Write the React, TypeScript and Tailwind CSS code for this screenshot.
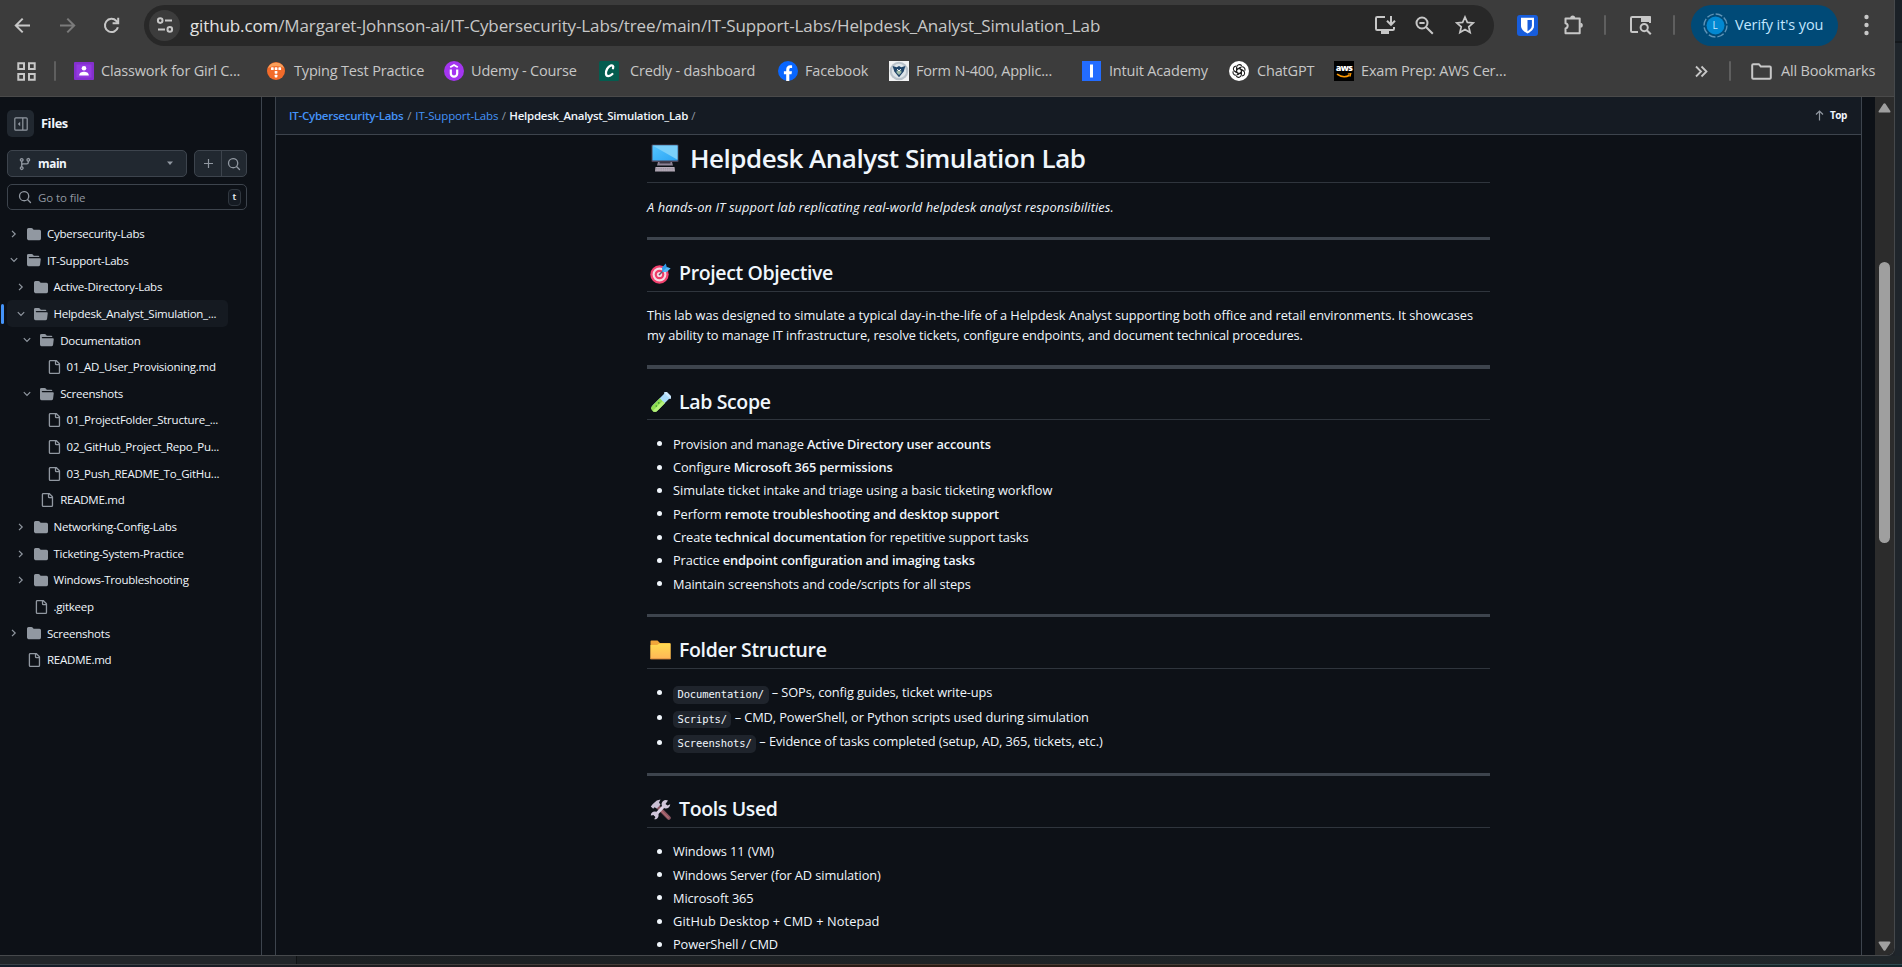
import React from "react";

type P = { children?: React.ReactNode };

/* ---------- toolbar icons ---------- */

const stroke = { fill: "none", stroke: "currentColor", strokeWidth: 2 } as const;

const Arrow = ({ flip }: { flip?: boolean }) => (
  <svg width="17" height="17" viewBox="0 0 17 17" className={flip ? "rotate-180" : ""} {...stroke}>
    <path d="M16 8.5H2M8.7 1.6L1.8 8.5l6.9 6.9" />
  </svg>
);

const Reload = () => (
  <svg width="17" height="17" viewBox="0 0 17 17" {...stroke}>
    <path d="M14.9 10.2A6.6 6.6 0 1 1 13.4 4L15 5.7" />
    <path d="M15.2 0.8v5.4H9.6" />
  </svg>
);

const Tune = () => (
  <svg width="18" height="18" viewBox="0 0 18 18" {...stroke}>
    <circle cx="4.2" cy="4.6" r="2.3" />
    <path d="M9 4.6h7M2 13.4h7" />
    <circle cx="13.8" cy="13.4" r="2.3" />
  </svg>
);

const Install = () => (
  <svg width="22" height="20" viewBox="0 0 22 20" {...stroke}>
    <path d="M11 2H3.2Q2 2 2 3.2v10.6Q2 15 3.2 15h15.6q1.2 0 1.2-1.2V12" />
    <path d="M7 17.5h8" strokeWidth="3" />
    <path d="M17 1v8M13 5.8l4 4 4-4" />
  </svg>
);

const ZoomOut = () => (
  <svg width="19" height="19" viewBox="0 0 19 19" {...stroke}>
    <circle cx="7" cy="7" r="5.5" />
    <path d="M11 11l6.8 6.8M4.4 7h5.2" />
  </svg>
);

const Star = () => (
  <svg width="20" height="20" viewBox="0 0 20 20" {...stroke} strokeWidth="1.7">
    <path d="M10 2l2.35 5.4 5.85.5-4.45 3.85 1.35 5.75L10 14.45 4.9 17.5l1.35-5.75L1.8 7.9l5.85-.5z" />
  </svg>
);

const Shield = () => (
  <svg width="21" height="21" viewBox="0 0 21 21">
    <rect width="21" height="21" rx="3" fill="#175ddc" />
    <path d="M4 2.8h13v8c0 4-4.2 6.6-6.5 7.8C8.2 17.4 4 14.8 4 10.800z" fill="#fff" />
    <path d="M10.5 5h4.4v5.8c0 2.6-2.6 4.4-4.4 5.4z" fill="#175ddc" />
  </svg>
);

const Puzzle = () => (
  <svg width="22" height="22" viewBox="0 0 22 22" {...stroke}>
    <path d="M2.5 4.5h14.2v14.7H2.5v-4.700a2.700 2.700 0 0 0 0-5.300z" strokeLinejoin="round" />
    <path d="M7.2 4a2.500 2.500 0 0 1 5 0zM17.300 8.800a2.500 2.500 0 0 1 0 5z" fill="currentColor" stroke="none" />
  </svg>
);

const TabSearch = () => (
  <svg width="23" height="20" viewBox="0 0 23 20" {...stroke}>
    <path d="M9 17H3.2Q2 17 2 15.8V3.2Q2 2 3.2 2h16.6Q21 2 21 3.2V8" />
    <path d="M12 1h9a1 1 0 0 1 1 1v5H12z" fill="currentColor" stroke="none" />
    <circle cx="15.2" cy="12.6" r="3.6" />
    <path d="M17.8 15.2l4 4" />
  </svg>
);

const Divider = () => <div className="h-5 w-[2px] shrink-0 rounded bg-[#5f5f5f]" />;

const Slot = ({ children, w }: P & { w: string }) => (
  <div className={`flex h-full shrink-0 items-center justify-center ${w}`}>{children}</div>
);

/* ---------- bookmark icons ---------- */

const fav: Record<string, React.ReactNode> = {
  classroom: (
    <svg width="20" height="20" viewBox="0 0 20 20">
      <rect y="1" width="20" height="18" rx="1" fill="#8430ce" />
      <rect x="2.5" y="3.5" width="15" height="13" fill="#a142f4" opacity=".5" />
      <circle cx="10" cy="7.2" r="2.3" fill="#fff" />
      <path d="M5.2 14.4c0-2.700 2.600-3.700 4.800-3.700s4.800 1 4.800 3.700z" fill="#fff" />
    </svg>
  ),
  typing: (
    <svg width="20" height="20" viewBox="0 0 20 20">
      <circle cx="9" cy="10" r="9" fill="#f26b2a" />
      <path d="M.8 7A9 9 0 0 1 17.200 7Q9 3 .8 7z" fill="#f9a05c" />
      <g fill="#fff">
        <rect x="4" y="6.3" width="2.700" height="2.700" rx=".6" />
        <rect x="7.700" y="6.3" width="2.700" height="2.700" rx=".6" />
        <rect x="11.400" y="6.3" width="2.700" height="2.700" rx=".6" />
        <rect x="7.700" y="10" width="2.700" height="2.700" rx=".6" />
        <rect x="7.700" y="13.700" width="2.700" height="2.700" rx=".6" />
      </g>
    </svg>
  ),
  udemy: (
    <svg width="20" height="20" viewBox="0 0 20 20">
      <circle cx="10" cy="10" r="10" fill="#a435f0" />
      <path d="M6.8 8.5v4a3.200 3.200 0 0 0 6.400 0v-4" fill="none" stroke="#fff" strokeWidth="2.2" />
      <path d="M6.2 6.2L10 4l3.800 2.200" fill="none" stroke="#fff" strokeWidth="1.8" />
    </svg>
  ),
  credly: (
    <svg width="20" height="20" viewBox="0 0 20 20">
      <rect width="20" height="20" rx="1.5" fill="#045c4f" />
      <path d="M14 7.2c.9-2.200-.6-3.300-2.400-2.600-2.700 1-5 5-4.600 8.200.4 3 3.700 3 6.400.2" fill="none" stroke="#fff" strokeWidth="2.3" strokeLinecap="round" />
    </svg>
  ),
  facebook: (
    <svg width="20" height="20" viewBox="0 0 20 20">
      <circle cx="10" cy="10" r="10" fill="#0866ff" />
      <path d="M8.2 20v-6.800H5.900v-3h2.300V8.700c0-3 1.500-4.500 4.300-4.500.6 0 1.300.1 1.600.2v2.700h-1.200c-1.200 0-1.600.5-1.600 1.600v1.500h2.700l-.5 3h-2.200V20z" fill="#fff" />
    </svg>
  ),
  uscis: (
    <svg width="20" height="20" viewBox="0 0 20 20">
      <rect width="20" height="20" fill="#f1f2f3" />
      <circle cx="10" cy="10" r="9.3" fill="#b9c2ca" />
      <circle cx="10" cy="10" r="7.2" fill="#dfe5e9" />
      <path d="M3.600 5l4.200 1.200L10 5l2.200 1.200L16.400 5l-1.700 5.500L10 16.200 5.300 10.500z" fill="#1f4468" />
      <path d="M7.600 9.500h4.800v2.300L10 14l-2.400-2.200z" fill="#9bb7a5" />
      <path d="M8.200 8l1.800 2 1.800-2" stroke="#fff" fill="none" />
    </svg>
  ),
  intuit: (
    <svg width="20" height="20" viewBox="0 0 20 20">
      <rect width="19" height="20" fill="#236cff" />
      <rect x="8" y="3.5" width="3" height="13" fill="#fff" />
    </svg>
  ),
  chatgpt: (
    <svg width="20" height="20" viewBox="0 0 20 20">
      <circle cx="10" cy="10" r="10" fill="#fff" />
      <g fill="none" stroke="#222" strokeWidth="1.1">
        {[0, 60, 120, 180, 240, 300].map((a) => (
          <path key={a} transform={`rotate(${a} 10 10)`} d="M7.600 11.300V6.400A2.800 2.800 0 0 1 12.700 4.900M7.600 8.700L11.800 6.200" />
        ))}
      </g>
    </svg>
  ),
  aws: (
    <div className="flex h-5 w-5 flex-col items-center bg-black pt-[2px]">
      <span className="font-['Open_Sans'] text-[9px] leading-[9px] font-extrabold tracking-[-0.6px] text-white">aws</span>
      <svg width="16" height="6" viewBox="0 0 16 6" className="mt-[1px]">
        <path d="M1 1.200Q7.500 5.800 13.600 2.200" fill="none" stroke="#f90" strokeWidth="1.6" />
        <path d="M11.800 1l3-.3-.8 2.900" fill="none" stroke="#f90" strokeWidth="1.1" />
      </svg>
    </div>
  ),
};

const bookmarks = [
  ["classroom", "Classwork for Girl C...", "w-[193px] gap-[7px]"],
  ["typing", "Typing Test Practice", "w-[177px] gap-[7px]"],
  ["udemy", "Udemy - Course", "w-[155px] gap-[7px]"],
  ["credly", "Credly - dashboard", "w-[179px] gap-[11px]"],
  ["facebook", "Facebook", "w-[111px] gap-[7px]"],
  ["uscis", "Form N-400, Applic...", "w-[193px] gap-[7px]"],
  ["intuit", "Intuit Academy", "w-[147px] gap-[7px]"],
  ["chatgpt", "ChatGPT", "w-[105px] gap-[8px]"],
  ["aws", "Exam Prep: AWS Cer...", "w-[180px] gap-[7px]"],
];

function Toolbar() {
  return (
    <div className="flex h-[50px] items-center text-[#c7c7c7]">
      <Slot w="w-[44px]"><Arrow /></Slot>
      <div className="flex w-[48px] justify-center text-[#7b7b7b]"><Arrow flip /></div>
      <Slot w="w-[43px]"><Reload /></Slot>
      <div className="ml-[11px] flex h-[41px] w-[1350px] shrink-0 items-center rounded-full bg-[#282828] pl-[5px]">
        <div className="flex h-[31px] w-[31px] items-center justify-center rounded-full bg-[#3c3c3c]"><Tune /></div>
        <div className="mt-[1px] ml-[10px] w-[1180px] text-[17px] tracking-[-0.12px]">
          <span className="text-[#e3e3e3]">github.com</span>
          /Margaret-Johnson-ai/IT-Cybersecurity-Labs/tree/main/IT-Support-Labs/Helpdesk_Analyst_Simulation_Lab
        </div>
        <Slot w="w-[29px]"><Install /></Slot>
        <Slot w="w-[50px]"><ZoomOut /></Slot>
        <Slot w="w-[32px]"><Star /></Slot>
      </div>
      <Slot w="w-[67px]"><Shield /></Slot>
      <Slot w="w-[25px]"><Puzzle /></Slot>
      <Slot w="w-[38px]"><Divider /></Slot>
      <Slot w="w-[33px]"><TabSearch /></Slot>
      <Slot w="w-[34px]"><Divider /></Slot>
      <div className="flex h-[41px] w-[147px] shrink-0 items-center rounded-full bg-[#004a77] pl-3 text-[14.5px] tracking-[-0.1px] text-[#c2e7ff]">
        <div className="relative flex h-6 w-6 items-center justify-center">
          <svg width="25" height="25" viewBox="0 0 25 25" className="absolute">
            <circle cx="12.5" cy="12.5" r="11.5" fill="none" stroke="#5f93b5" strokeWidth="1.4" strokeDasharray="7 2" />
            <circle cx="12.5" cy="12.5" r="9" fill="#0288d1" />
          </svg>
          <span className="relative text-[10px]">L</span>
        </div>
        <span className="ml-2 whitespace-nowrap">Verify it's you</span>
      </div>
      <Slot w="w-[56px]">
        <svg width="5" height="22" viewBox="0 0 5 22" fill="currentColor">
          <circle cx="2.5" cy="3" r="2.2" /><circle cx="2.5" cy="11" r="2.2" /><circle cx="2.5" cy="19" r="2.2" />
        </svg>
      </Slot>
    </div>
  );
}

function Bookmarks() {
  return (
    <div className="flex h-[42px] items-center text-[14.5px] tracking-[-0.18px] whitespace-nowrap text-[#c7c7c7]">
      <svg width="19" height="19" viewBox="0 0 19 19" className="ml-[17px] shrink-0" {...stroke}>
        <path d="M1.3 1.3h5.700V7H1.300zM12 1.300h5.700V7H12zM1.300 12h5.700v5.700H1.300zM12 12h5.700v5.700H12z" />
      </svg>
      <Slot w="w-[38px]"><Divider /></Slot>
      {bookmarks.map(([k, label, cls]) => (
        <div key={k} className={`flex shrink-0 items-center ${cls}`}>{fav[k]}<span>{label}</span></div>
      ))}
      <svg width="13" height="13" viewBox="0 0 13 13" className="ml-[181px] shrink-0" {...stroke} strokeWidth="1.8">
        <path d="M1 1.500l5 5-5 5M6.500 1.500l5 5-5 5" />
      </svg>
      <Slot w="w-[43px]"><Divider /></Slot>
      <svg width="21" height="17" viewBox="0 0 21 17" className="shrink-0" {...stroke}>
        <path d="M1.200 14.800V2.200Q1.200 1.200 2.200 1.200h5.600l2 2.300h9q1 0 1 1v10.300q0 1-1 1H2.200q-1 0-1-1z" />
      </svg>
      <span className="ml-[9px]">All Bookmarks</span>
    </div>
  );
}

/* ---------- file tree ---------- */

const Folder = ({ open }: { open?: boolean }) => (
  <svg width="14" height="14" viewBox="0 0 16 16" fill="#9198a1" className="shrink-0">
    {open ? (
      <path d="M.513 1.513A1.750 1.750 0 0 1 1.750 1h3.500c.550 0 1.070.260 1.400.700l.900 1.200a.250.250 0 0 0 .200.100H13a1 1 0 0 1 1 1v.500H2.750a.750.750 0 0 0 0 1.500h11.978a1 1 0 0 1 .994 1.117L15 13.250A1.750 1.750 0 0 1 13.250 15H1.750A1.750 1.750 0 0 1 0 13.250V2.750c0-.464.184-.910.513-1.237Z" />
    ) : (
      <path d="M1.750 1A1.750 1.750 0 0 0 0 2.750v10.500C0 14.216.784 15 1.750 15h12.500A1.750 1.750 0 0 0 16 13.250v-8.500A1.750 1.750 0 0 0 14.250 3H7.500a.250.250 0 0 1-.200-.100l-.900-1.200C6.070 1.260 5.550 1 5 1H1.750Z" />
    )}
  </svg>
);

const FileIcon = () => (
  <svg width="14" height="14" viewBox="0 0 16 16" fill="#9198a1" className="shrink-0">
    <path d="M2 1.750C2 .784 2.784 0 3.750 0h6.586c.464 0 .909.184 1.237.513l2.914 2.914c.329.328.513.773.513 1.237v9.586A1.750 1.750 0 0 1 13.250 16h-9.500A1.750 1.750 0 0 1 2 14.250Zm1.750-.250a.250.250 0 0 0-.250.250v12.500c0 .138.112.250.250.250h9.500a.250.250 0 0 0 .250-.250V6h-2.750A1.750 1.750 0 0 1 9 4.250V1.500Zm6.750.062V4.250c0 .138.112.250.250.250h2.688l-.011-.013-2.914-2.914-.013-.011Z" />
  </svg>
);

const Chevron = ({ open }: { open?: boolean }) => (
  <svg width="8" height="8" viewBox="0 0 8 8" fill="none" stroke="#9198a1" strokeWidth="1.2" className="shrink-0">
    {open ? <path d="M.8 2.200L4 5.400l3.200-3.200" /> : <path d="M2 .8L5.200 4 2 7.200" />}
  </svg>
);

const Search = () => (
  <svg width="14" height="14" viewBox="0 0 16 16" fill="#9198a1" className="shrink-0">
    <path d="M10.680 11.740a6 6 0 0 1-7.922-8.982 6 6 0 0 1 8.982 7.922l3.040 3.040a.749.749 0 1 1-1.060 1.060ZM11.500 7a4.499 4.499 0 1 0-8.997 0A4.499 4.499 0 0 0 11.500 7Z" />
  </svg>
);

type Kind = "closed" | "open" | "file";
const tree: [Kind, number, string][] = [
  ["closed", 0, "Cybersecurity-Labs"],
  ["open", 0, "IT-Support-Labs"],
  ["closed", 1, "Active-Directory-Labs"],
  ["open", 1, "Helpdesk_Analyst_Simulation_..."],
  ["open", 2, "Documentation"],
  ["file", 3, "01_AD_User_Provisioning.md"],
  ["open", 2, "Screenshots"],
  ["file", 3, "01_ProjectFolder_Structure_..."],
  ["file", 3, "02_GitHub_Project_Repo_Pu..."],
  ["file", 3, "03_Push_README_To_GitHu..."],
  ["file", 2, "README.md"],
  ["closed", 1, "Networking-Config-Labs"],
  ["closed", 1, "Ticketing-System-Practice"],
  ["closed", 1, "Windows-Troubleshooting"],
  ["file", 1, ".gitkeep"],
  ["closed", 0, "Screenshots"],
  ["file", 0, "README.md"],
];
const indent = ["pl-[3px]", "pl-[9.5px]", "pl-[16.2px]", "pl-[22.6px]"];

function Sidebar() {
  return (
    <aside className="flex w-[262px] shrink-0 flex-col border-r border-[#3d444d] text-[#f0f6fc]">
      <div className="mt-[13px] ml-[7px] flex items-center">
        <div className="flex h-[27px] w-[27px] items-center justify-center rounded-[5px] bg-[#212830]">
          <svg width="14" height="14" viewBox="0 0 14 14" fill="none" stroke="#9198a1" strokeWidth="1.2">
            <rect x=".8" y=".8" width="12.4" height="12.4" rx="1" />
            <path d="M8.800 1v12" />
            <path d="M6.200 4.800v4.400L3.800 7z" fill="#9198a1" stroke="none" />
          </svg>
        </div>
        <span className="mt-[1px] ml-[7px] text-[12.8px] font-bold tracking-[-0.4px]">Files</span>
      </div>
      <div className="mt-[13px] ml-[7px] flex gap-[7px]">
        <div className="flex h-[27px] w-[180px] items-center rounded-[5px] border border-[#3d444d] bg-[#212830] pl-[10px]">
          <svg width="14" height="14" viewBox="0 0 16 16" fill="#9198a1">
            <path d="M9.500 3.250a2.250 2.250 0 1 1 3 2.122V6A2.500 2.500 0 0 1 10 8.500H6a1 1 0 0 0-1 1v1.128a2.251 2.251 0 1 1-1.500 0V5.372a2.250 2.250 0 1 1 1.500 0v1.836A2.493 2.493 0 0 1 6 7h4a1 1 0 0 0 1-1v-.628A2.250 2.250 0 0 1 9.500 3.250Zm-6 0a.750.750 0 1 0 1.500 0 .750.750 0 0 0-1.500 0Zm8.250-.750a.750.750 0 1 0 0 1.500.750.750 0 0 0 0-1.500ZM4.250 12a.750.750 0 1 0 0 1.500.750.750 0 0 0 0-1.500Z" />
          </svg>
          <span className="ml-[6px] w-[128px] text-[11.8px] font-bold tracking-[-0.4px]">main</span>
          <svg width="8" height="5" viewBox="0 0 8 5" fill="#9198a1"><path d="M1 .5h6L4 4z" /></svg>
        </div>
        <div className="flex h-[27px] w-[53px] rounded-[5px] border border-[#3d444d] bg-[#212830]">
          <div className="flex w-[27px] items-center justify-center border-r border-[#3d444d]">
            <svg width="11" height="11" viewBox="0 0 11 11" stroke="#9198a1" strokeWidth="1.2"><path d="M5.500 1v9M1 5.500h9" /></svg>
          </div>
          <div className="flex flex-1 items-center justify-center"><Search /></div>
        </div>
      </div>
      <div className="mt-[7px] ml-[7px] flex h-[26px] w-[240px] items-center rounded-[5px] border border-[#3d444d] pr-[5px] pl-[10px]">
        <Search />
        <span className="mt-[1px] ml-[6px] text-[11.5px] tracking-[-0.1px] text-[#9198a1]">Go to file</span>
        <span className="ml-auto flex h-[17px] w-[13px] items-center justify-center rounded-[4px] border border-[#30373f] bg-[#151b23] text-[9.5px] leading-none font-semibold">t</span>
      </div>
      <div className="mt-[10.3px] ml-[1px] flex flex-col">
        {tree.map(([kind, level, name], i) => {
          const active = i === 3;
          return (
            <div key={i} className="flex h-[26.67px] items-center">
              <div className={active ? "h-5 w-[3px] shrink-0 rounded bg-[#4493f8]" : "w-[3px] shrink-0"} />
              <div className={`ml-[3px] flex h-full w-[221px] items-center rounded-[5px] ${indent[level]} ${active ? "bg-[#151a21]" : ""}`}>
                <div className="flex w-[17px] shrink-0">{kind !== "file" && <Chevron open={kind === "open"} />}</div>
                {kind === "file" ? <FileIcon /> : <Folder open={kind === "open"} />}
                <span className="ml-[6px] text-[11.5px] leading-none tracking-[-0.24px] whitespace-nowrap">{name}</span>
              </div>
            </div>
          );
        })}
      </div>
    </aside>
  );
}

/* ---------- heading glyphs ---------- */

const Computer = () => (
  <svg width="28" height="28" viewBox="0 0 28 28">
    <defs>
      <linearGradient id="scr" x1="0" y1="0" x2="1" y2="1">
        <stop offset="0" stopColor="#55c4ff" /><stop offset="1" stopColor="#2aa5f5" />
      </linearGradient>
    </defs>
    <rect x=".5" y=".5" width="27" height="17.5" rx="1" fill="#4a4458" />
    <rect x="1.5" y="1.5" width="25" height="15" fill="url(#scr)" />
    <path d="M1.500 1.500h25v14.300z" fill="#7ad0fb" />
    <path d="M7 18h14l1 3.500H6z" fill="#8d8496" />
    <rect x="8.5" y="17.5" width="11" height="2" fill="#3a3644" />
    <path d="M4.500 23h19l.5 4.500H4z" fill="#b5acb9" />
    <path d="M5 24.500h18M5 26h18" stroke="#8f8795" strokeWidth=".6" strokeDasharray="1.5 .7" />
  </svg>
);

const Target = () => (
  <svg width="21" height="21" viewBox="0 0 21 21">
    <circle cx="9.5" cy="11.5" r="9.2" fill="#f2426f" />
    <circle cx="9.5" cy="11.5" r="6.9" fill="#f3dbe4" />
    <circle cx="9.5" cy="11.5" r="4.8" fill="#ee3d68" />
    <circle cx="9.5" cy="11.5" r="2.6" fill="#f3dbe4" />
    <path d="M9 12l6-6" stroke="#5b5570" strokeWidth="1.4" />
    <path d="M12.300 8.700l-.300-4.200L15.800.600l1 3.600 3.700 1-3.900 3.800z" fill="#2f9bea" />
    <path d="M12.300 8.700L16.800 4.200l3.700 1-3.900 3.800z" fill="#56b9f8" />
  </svg>
);

const Tube = () => (
  <svg width="21" height="21" viewBox="0 0 21 21">
    <g transform="rotate(45 10.5 10.5)">
      <path d="M7 1h7v17a3.500 3.500 0 0 1-7 0z" fill="#a9dbfb" />
      <path d="M7 8h7v10.500a3.500 3.500 0 0 1-7 0z" fill="#8fdc50" />
      <path d="M11 8h3v10.500a3.500 3.500 0 0 1-3 3.500z" fill="#b5f07a" />
      <rect x="6" y="-1.5" width="9" height="3" rx=".8" fill="#cbe9ff" />
      <circle cx="9.5" cy="12" r=".9" fill="#3d9c3a" /><circle cx="10" cy="16" r=".8" fill="#3d9c3a" />
    </g>
  </svg>
);

const YellowFolder = () => (
  <svg width="21" height="20" viewBox="0 0 21 20">
    <defs>
      <linearGradient id="fld" x1="0" y1="0" x2="0" y2="1">
        <stop offset="0" stopColor="#ffdc50" /><stop offset="1" stopColor="#ffb657" />
      </linearGradient>
    </defs>
    <path d="M.5 1.500Q.5.500 1.500.500h6l2.500 2.500H19.500q1 0 1 1V19H.5z" fill="#f0a63a" />
    <path d="M.5 5h6.500l2.500-1.500h11V19H.5z" fill="url(#fld)" />
    <rect x=".5" y="18.4" width="20" height="1" fill="#d98a3e" />
  </svg>
);

const Tools = () => (
  <svg width="21" height="21" viewBox="0 0 21 21">
    <path d="M8.500 8.500l10.300 10.300" stroke="#8a5561" strokeWidth="4" strokeLinecap="round" />
    <path d="M10 10.500l8.300 8.300" stroke="#b06a72" strokeWidth="1.4" strokeLinecap="round" />
    <path d="M.8 7.500L2.800 5l4-3.600L10.500.500 9 3.400l1.500 2.400L6.800 9.600 4.500 8.200 3.200 9.800z" fill="#c9bfd3" />
    <path d="M4.500 17L14.500 6.500" stroke="#ddd3e6" strokeWidth="3" />
    <path d="M18 1.500A4.300 4.300 0 1 0 20.200 5.200L17.500 6.600l-2-1.700z" fill="#cfc5d9" />
    <path d="M.8 16.400A3.900 3.900 0 1 1 4.200 20.300L5.600 17.800 3.900 16z" fill="#cfc5d9" />
  </svg>
);

/* ---------- readme ---------- */

const Rule = () => <div className="my-[20px] h-[3.33px] bg-[#3d444d]" />;
const H2 = ({ icon, children }: P & { icon: React.ReactNode }) => (
  <h2 className="mb-[13.33px] flex h-[31.83px] items-start border-b border-[#2f353d] text-[19.5px] leading-[26px] font-semibold tracking-[-0.358px]">
    <span className="mt-[3px] mr-[8px] ml-[3px]">{icon}</span>
    {children}
  </h2>
);
const B = ({ children }: P) => <strong className="font-semibold tracking-[-0.135px]">{children}</strong>;
const Code = ({ children }: P) => (
  <code className="inline-block h-[17.5px] rounded-[5px] bg-[#1f242c] px-[4.5px] align-[-1px] font-['DejaVu_Sans_Mono',monospace] text-[10.5px] leading-[16px] tracking-[-0.144px]">{children}</code>
);
const List = ({ items, row }: { items: React.ReactNode[]; row: string }) => (
  <ul className="flex flex-col gap-[3.33px] pl-[10px]">
    {items.map((it, i) => (
      <li key={i} className={`flex items-center tracking-[-0.09px] ${row}`}>
        <span className="mr-[11px] h-[5px] w-[5px] rounded-full bg-[#f0f6fc]" />
        <span>{it}</span>
      </li>
    ))}
  </ul>
);

function Readme() {
  return (
    <article className="mx-auto mt-[5.4px] w-[843px] text-[12.8px] leading-[20px] tracking-[-0.052px] text-[#f0f6fc]">
      <h1 className="flex h-[43px] items-start border-b border-[#2f353d] text-[26px] leading-[36px] font-semibold tracking-[-0.48px]">
        <span className="mt-[4px] mr-[11px] ml-[4px]"><Computer /></span>
        Helpdesk Analyst Simulation Lab
      </h1>
      <p className="mt-[13.33px] tracking-[0.105px] italic">
        A hands-on IT support lab replicating real-world helpdesk analyst responsibilities.
      </p>
      <Rule />
      <H2 icon={<Target />}>Project Objective</H2>
      <p>
        This lab was designed to simulate a typical day-in-the-life of a Helpdesk Analyst supporting both office and retail environments. It showcases
        <br />
        <span className="tracking-[-0.1px]">my ability to manage IT infrastructure, resolve tickets, configure endpoints, and document technical procedures.</span>
      </p>
      <Rule />
      <H2 icon={<Tube />}>Lab Scope</H2>
      <List
        row="h-[20px]"
        items={[
          <>Provision and manage <B>Active Directory user accounts</B></>,
          <>Configure <B>Microsoft 365 permissions</B></>,
          <span className="tracking-[-0.052px]">Simulate ticket intake and triage using a basic ticketing workflow</span>,
          <>Perform <B>remote troubleshooting and desktop support</B></>,
          <>Create <B>technical documentation</B> for repetitive support tasks</>,
          <>Practice <B>endpoint configuration and imaging tasks</B></>,
          "Maintain screenshots and code/scripts for all steps",
        ]}
      />
      <Rule />
      <H2 icon={<YellowFolder />}>Folder Structure</H2>
      <List
        row="h-[21.3px]"
        items={[
          <><Code>Documentation/</Code> – SOPs, config guides, ticket write-ups</>,
          <><Code>Scripts/</Code> – CMD, PowerShell, or Python scripts used during simulation</>,
          <><Code>Screenshots/</Code> – Evidence of tasks completed (setup, AD, 365, tickets, etc.)</>,
        ]}
      />
      <Rule />
      <H2 icon={<Tools />}>Tools Used</H2>
      <List
        row="h-[20px]"
        items={[
          "Windows 11 (VM)",
          "Windows Server (for AD simulation)",
          "Microsoft 365",
          <span className="tracking-[0.1px]">GitHub Desktop + CMD + Notepad</span>,
          "PowerShell / CMD",
        ]}
      />
    </article>
  );
}

function Main() {
  return (
    <main className="mr-[13px] ml-[13px] flex min-w-0 flex-1 flex-col border-x border-[#3d444d]">
      <div className="flex h-[38px] shrink-0 items-center border-b border-[#3d444d] bg-[#151b23] pr-[14px] pl-[13px] text-[11.5px] tracking-[-0.24px] whitespace-nowrap text-[#9198a1]">
        <span className="font-semibold text-[#4493f8]">IT-Cybersecurity-Labs</span>
        <span className="mx-[4px]">/</span>
        <span className="tracking-[-0.134px] text-[#4493f8]">IT-Support-Labs</span>
        <span className="mx-[3.5px]">/</span>
        <span className="font-semibold tracking-[-0.27px] text-[#f0f6fc]">Helpdesk_Analyst_Simulation_Lab</span>
        <span className="mx-[3px]">/</span>
        <svg width="9" height="11" viewBox="0 0 9 11" fill="none" stroke="#9198a1" strokeWidth="1.2" className="ml-auto">
          <path d="M4.500 10.500V1M1 4.500L4.500 1 8 4.500" />
        </svg>
        <span className="ml-[6px] text-[10px] font-bold tracking-[-0.4px] text-[#f0f6fc]">Top</span>
      </div>
      <div className="min-h-0 flex-1 overflow-hidden"><Readme /></div>
    </main>
  );
}

export default function App() {
  return (
    <div className="flex h-[967px] w-[1902px] flex-col overflow-hidden bg-[#1f2328] font-['Open_Sans','Noto_Sans',sans-serif]">
      <div className="flex h-[956px] shrink-0">
        <div className="flex w-[1895px] flex-col overflow-hidden rounded-br-[8px] border-r border-b border-[#46494c] bg-[#0d1117]">
          <div className="h-[97px] shrink-0 border-b border-[#4a4a4a] bg-[#3c3c3c]">
            <Toolbar />
            <Bookmarks />
          </div>
          <div className="flex min-h-0 flex-1">
            <Sidebar />
            <Main />
            <div className="flex w-[19px] shrink-0 flex-col items-center bg-[#2c2c2c]">
              <svg width="13" height="10" viewBox="0 0 13 10" className="mt-[6px]" fill="#9f9f9f"><path d="M5.500.800q1-1 2 0L12.300 8q.5 1.500-1 1.500H1.700Q.2 9.500.7 8z" /></svg>
              <div className="mt-[149px] h-[281px] w-[11px] rounded-full bg-[#9f9f9f]" />
              <svg width="13" height="10" viewBox="0 0 13 10" className="mt-auto mb-[4px] rotate-180" fill="#9f9f9f"><path d="M5.500.800q1-1 2 0L12.300 8q.5 1.500-1 1.500H1.700Q.2 9.500.7 8z" /></svg>
            </div>
          </div>
        </div>
        <div className="flex-1 bg-[#1f252b]"><div className="h-[43px] border-b-2 border-[#14181c] bg-[#1b2127]" /></div>
      </div>
      <div className="flex h-[8px] shrink-0">
        <div className="w-[297px] border-r border-[#0f1214] bg-[#212529]" />
        <div className="flex-1 bg-gradient-to-r from-[#1b1f22] to-[#20262a]" />
      </div>
      <div className="h-[1px] shrink-0 bg-gradient-to-r from-[#3a4248] via-[#4b3a30] to-[#2f4a50]" />
      <div className="flex-1 bg-gradient-to-r from-[#141d2a] via-[#2c1a12] to-[#12262c]" />
    </div>
  );
}
